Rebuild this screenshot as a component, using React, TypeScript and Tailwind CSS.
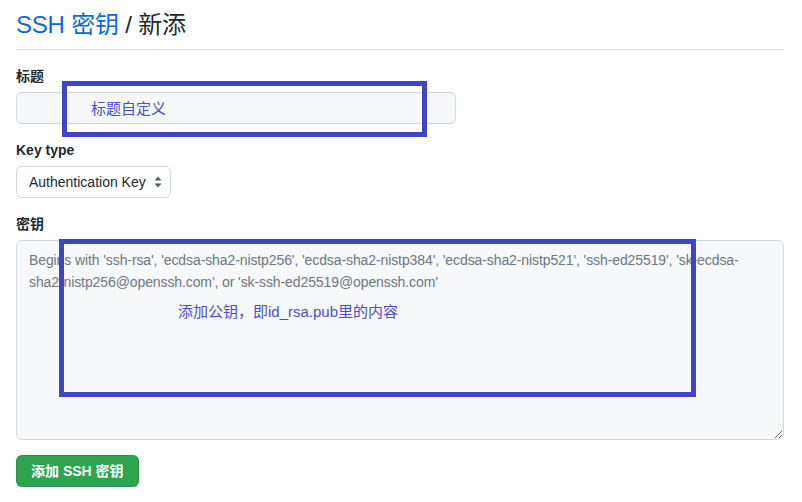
const font = '[font-family:"Liberation_Sans","Noto_Sans_CJK_SC",sans-serif]';

const placeholder =
  "Begins with 'ssh-rsa', 'ecdsa-sha2-nistp256', 'ecdsa-sha2-nistp384', 'ecdsa-sha2-nistp521', 'ssh-ed25519', 'sk-ecdsa-\nsha2-nistp256@openssh.com', or 'sk-ssh-ed25519@openssh.com'";

function Label({ children }: { children: React.ReactNode }) {
  return <label className="block text-[14px] font-bold leading-5">{children}</label>;
}

export default function App() {
  return (
    <div className={`min-h-[502px] w-[802px] bg-white px-4 text-[#24292f] ${font}`}>
      <div className="w-[768px]">
        {/* header */}
        <div className="border-b border-[#d8dee4] pb-[6px] pt-[7px]">
          <h1 className="text-[24px] font-normal leading-[36px] tracking-[-0.2px]">
            <a className="text-[#0969da]">SSH 密钥</a> / 新添
          </h1>
        </div>

        <form onSubmit={(e) => e.preventDefault()} className="mt-4 flex flex-col items-start gap-4">
          <div className="flex flex-col gap-[6px]">
            <Label>标题</Label>
            <div className="relative">
              <input
                type="text"
                className="block h-8 w-[440px] rounded-md border border-[#d0d7de] bg-[#f6f8fa] px-3 text-[14px] outline-none"
              />
              {/* annotation */}
              <div className="pointer-events-none absolute -top-[11px] left-[46px] flex h-[56px] w-[365px] items-center border-[5px] border-[#3f44c8] pl-[24px] text-[15px] leading-5 text-[#4a4fd0]">
                标题自定义
              </div>
            </div>
          </div>

          <div className="flex flex-col gap-[6px]">
            <Label>Key type</Label>
            <div className="relative w-[155px]">
              <select className="block h-8 w-full appearance-none rounded-md border border-[#d0d7de] bg-white pl-3 pr-6 text-[14px] text-[#24292f] outline-none">
                <option>Authentication Key</option>
              </select>
              <svg
                viewBox="0 0 8 12"
                className="pointer-events-none absolute right-[9px] top-[10px] h-[12px] w-[8px] fill-[#57606a]"
              >
                <path d="M4 0.5 L7.5 4.5 H0.5 Z" />
                <path d="M4 11.5 L7.5 7.5 H0.5 Z" />
              </svg>
            </div>
          </div>

          <div className="flex flex-col gap-[6px]">
            <Label>密钥</Label>
            <div className="relative">
              <textarea
                placeholder={placeholder}
                className="block h-[200px] w-[768px] resize-y rounded-md border border-[#d0d7de] bg-[#f6f8fa] px-3 pt-[8px] text-[14px] leading-[22px] tracking-[-0.1px] outline-none placeholder:text-[#6e7781]"
              />
              {/* annotation */}
              <div className="pointer-events-none absolute -top-[1px] left-[43px] h-[158px] w-[637px] border-[5px] border-[#3f44c8] pl-[114px] pt-[58px] text-[15px] leading-5 text-[#4a4fd0]">
                添加公钥，即id_rsa.pub里的内容
              </div>
            </div>
          </div>

          <button
            type="submit"
            className="-mt-[1px] h-8 rounded-md border border-[#1b1f2426] bg-[#2da44e] px-[14px] text-[14px] font-bold text-white"
          >
            添加 SSH 密钥
          </button>
        </form>
      </div>
    </div>
  );
}
